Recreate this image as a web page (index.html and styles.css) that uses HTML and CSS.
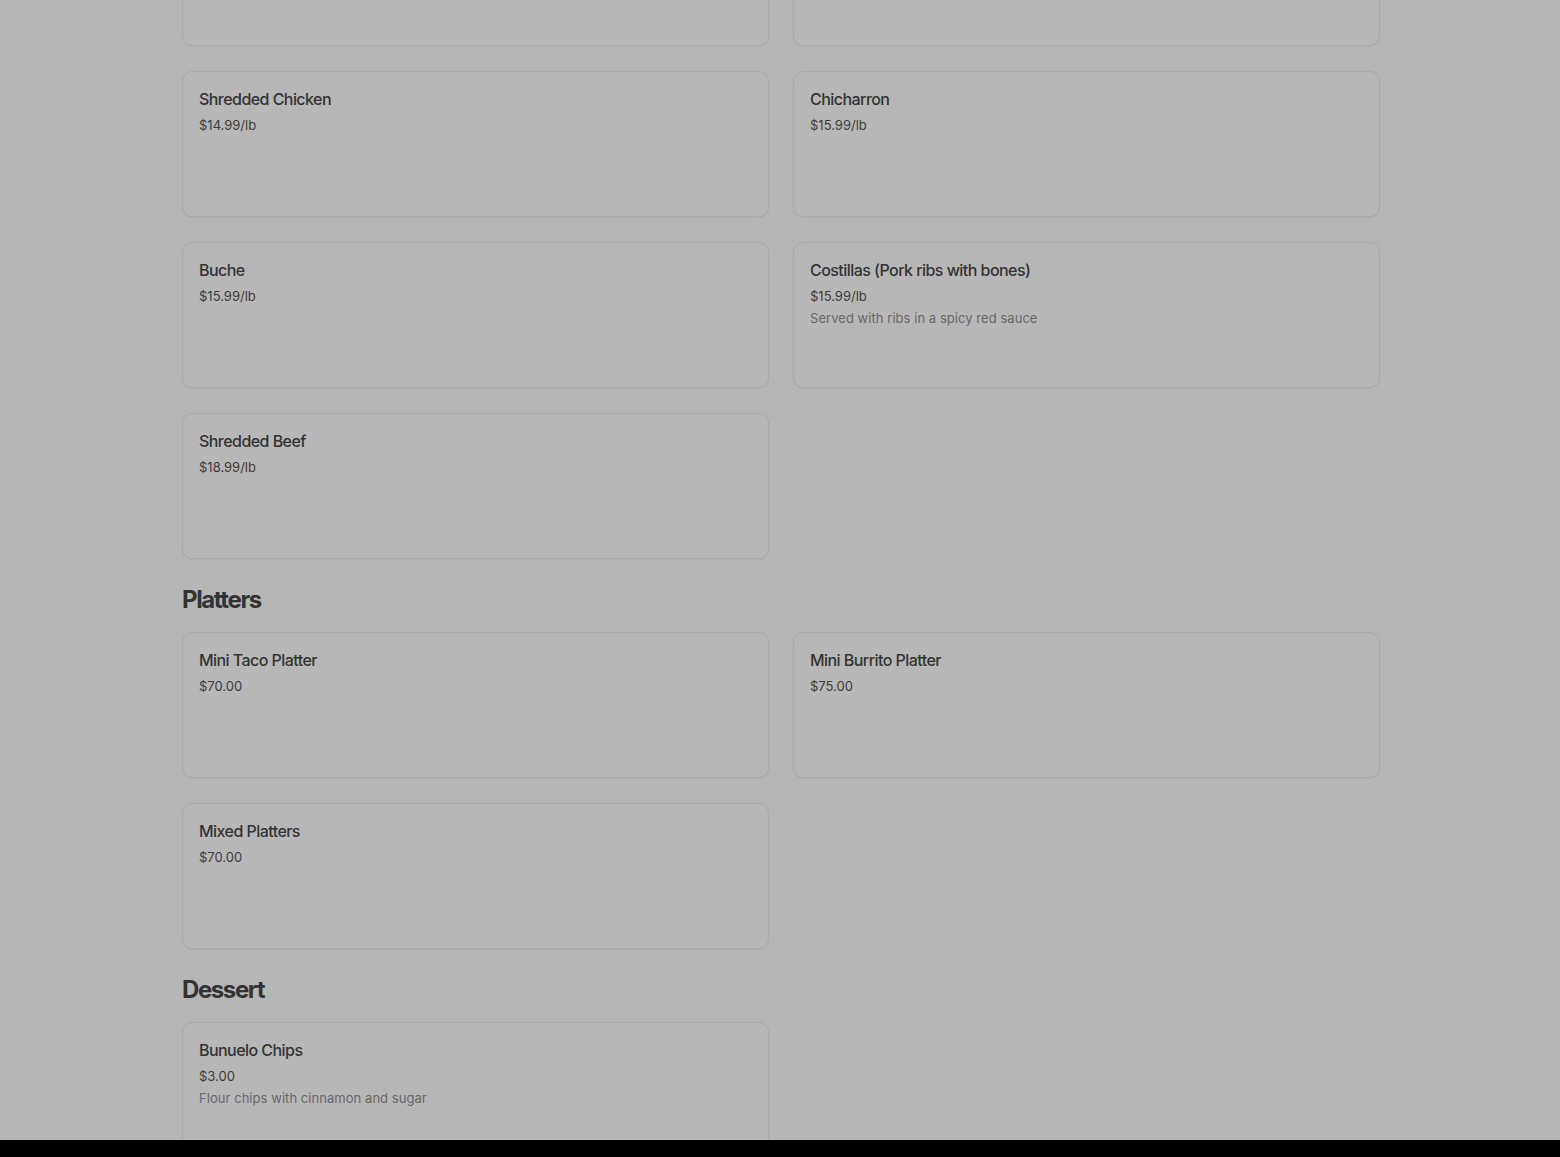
FILE: index.html
```html
<!DOCTYPE html>
<html lang="en">
<head>
<meta charset="utf-8">
<title>Menu</title>
<link rel="stylesheet" href="styles.css">
</head>
<body>
<main class="menu">
  <section class="section">
    <div class="grid">
      <div class="card"></div>
      <div class="card"></div>
      <div class="card">
        <div class="item-title">Shredded Chicken</div>
        <div class="item-price">$14.99/lb</div>
      </div>
      <div class="card">
        <div class="item-title">Chicharron</div>
        <div class="item-price">$15.99/lb</div>
      </div>
      <div class="card">
        <div class="item-title">Buche</div>
        <div class="item-price">$15.99/lb</div>
      </div>
      <div class="card">
        <div class="item-title">Costillas (Pork ribs with bones)</div>
        <div class="item-price">$15.99/lb</div>
        <div class="item-desc">Served with ribs in a spicy red sauce</div>
      </div>
      <div class="card">
        <div class="item-title">Shredded Beef</div>
        <div class="item-price">$18.99/lb</div>
      </div>
    </div>
  </section>
  <section class="section">
    <h2 class="section-title">Platters</h2>
    <div class="grid">
      <div class="card">
        <div class="item-title">Mini Taco Platter</div>
        <div class="item-price">$70.00</div>
      </div>
      <div class="card">
        <div class="item-title">Mini Burrito Platter</div>
        <div class="item-price">$75.00</div>
      </div>
      <div class="card">
        <div class="item-title">Mixed Platters</div>
        <div class="item-price">$70.00</div>
      </div>
    </div>
  </section>
  <section class="section">
    <h2 class="section-title">Dessert</h2>
    <div class="grid">
      <div class="card">
        <div class="item-title">Bunuelo Chips</div>
        <div class="item-price">$3.00</div>
        <div class="item-desc">Flour chips with cinnamon and sugar</div>
      </div>
    </div>
  </section>
</main>
<div class="bottom-bar"></div>
</body>
</html>
```

FILE: styles.css
```css
html, body {
  margin: 0;
  padding: 0;
  background: #b6b6b6;
  font-family: Inter, "Liberation Sans", sans-serif;
  overflow: hidden;
  height: 1157px;
}

.menu {
  width: 1198px;
  margin: -100px 0 0 182px;
}

.section-title {
  margin: 25px 0 16px;
  font-size: 24px;
  line-height: 32px;
  font-weight: 700;
  letter-spacing: -1.4px;
  color: #333333;
}

.grid {
  display: grid;
  grid-template-columns: 1fr 1fr;
  gap: 25px 24px;
}

.card {
  box-sizing: border-box;
  height: 146px;
  padding: 17px 16px 15px;
  border: 1px solid #aaaaaa;
  border-radius: 10px;
  background: #b7b7b7;
  box-shadow: 0 1px 1px rgba(0, 0, 0, 0.04);
}

.item-title {
  font-size: 16px;
  line-height: 20px;
  font-weight: 500;
  letter-spacing: -0.55px;
  color: #333333;
}

.item-price {
  margin-top: 6px;
  font-size: 13px;
  line-height: 20px;
  letter-spacing: 0;
  color: #3c3c3c;
}

.item-desc {
  margin-top: 2px;
  font-size: 13px;
  line-height: 20px;
  letter-spacing: 0.05px;
  color: #676767;
}

.bottom-bar {
  position: fixed;
  left: 0;
  right: 0;
  bottom: 0;
  height: 17px;
  background: #000000;
}
```
